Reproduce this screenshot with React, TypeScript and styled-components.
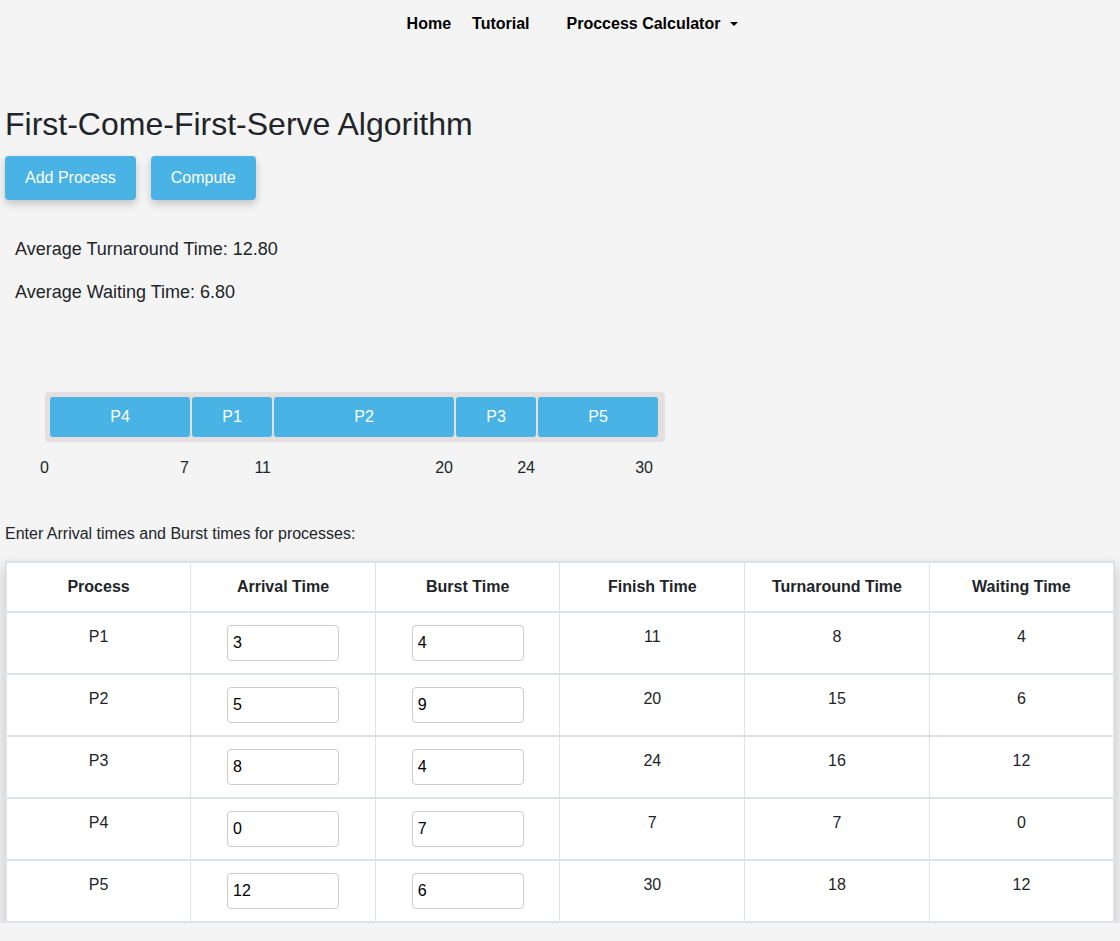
import React from "react";
import styled, { createGlobalStyle } from "styled-components";

const GlobalStyle = createGlobalStyle`
  html, body { margin: 0; padding: 0; background: #f4f4f4; }
  body { font-family: "Liberation Sans", Arial, sans-serif; color: #212529; font-size: 16px; }
  * { box-sizing: border-box; }
`;

const Nav = styled.nav`
  height: 46px;
  display: flex;
  justify-content: center;
  align-items: center;
  padding: 2px 0 0 25px;
`;

const NavLink = styled.a<{ $gap?: number }>`
  font-weight: 700;
  font-size: 16px;
  color: #000;
  text-decoration: none;
  margin-right: ${(p) => p.$gap ?? 0}px;
  display: inline-flex;
  align-items: center;
`;

const Caret = styled.span`
  display: inline-block;
  margin-left: 10px;
  width: 0;
  height: 0;
  border-left: 4px solid transparent;
  border-right: 4px solid transparent;
  border-top: 4px solid #000;
`;

const Page = styled.main`
  padding: 0 5px;
`;

const Title = styled.h2`
  font-size: 32px;
  font-weight: 400;
  line-height: 1.2;
  margin: 59px 0 13px;
  color: #212529;
`;

const ButtonRow = styled.div`
  display: flex;
  gap: 15px;
`;

const Button = styled.button`
  background: #48b3e4;
  color: #fff;
  border: none;
  border-radius: 4px;
  font-family: inherit;
  font-size: 16px;
  line-height: 24px;
  padding: 10px 20px;
  box-shadow: 0 4px 8px rgba(0, 0, 0, 0.2);
  cursor: pointer;
`;

const Stats = styled.div`
  padding-left: 10px;
  margin-top: 37px;
`;

const Stat = styled.p`
  margin: 0 0 19px;
  font-size: 18px;
  line-height: 24px;
  color: #212529;
`;

const Gantt = styled.div`
  margin: 88px 0 0 40px;
`;

const Bar = styled.div`
  display: inline-flex;
  gap: 2px;
  background: #e5dfdf;
  border-radius: 4px;
  padding: 5px 7px 5px 5px;
`;

const Block = styled.div`
  height: 40px;
  background: #48b3e4;
  color: #fff;
  border-radius: 3px;
  display: flex;
  align-items: center;
  justify-content: center;
  font-size: 16px;
`;

const Axis = styled.div`
  display: flex;
  margin-top: 17px;
  margin-left: -16px;
  font-size: 16px;
  color: #212529;
`;

const Tick = styled.div<{ $pad?: number }>`
  text-align: right;
  padding-right: ${(p) => p.$pad ?? 2}px;
`;

const Prompt = styled.p`
  margin: 48px 0 18px;
  font-size: 16px;
  color: #212529;
`;

const Table = styled.table`
  width: 100%;
  table-layout: fixed;
  border-collapse: collapse;
  background: #fff;
  border: 2px solid #dee2e6;
  box-shadow: 0 6px 14px rgba(0, 0, 0, 0.2);
`;

const Th = styled.th`
  font-weight: 700;
  padding: 12px;
  line-height: 24px;
  text-align: center;
  border-left: 1px solid #dee2e6;
  border-bottom: 2px solid #dee2e6;
  color: #212529;
`;

const Td = styled.td`
  padding: 12px;
  line-height: 24px;
  text-align: center;
  vertical-align: top;
  border-left: 1px solid #dee2e6;
  border-top: 2px solid #dee2e6;
  color: #212529;
`;

const Input = styled.input`
  width: 112px;
  height: 36px;
  border: 1px solid #ccc;
  border-radius: 4px;
  padding: 0 5px;
  font-family: inherit;
  font-size: 16px;
  color: #000;
  background: #fff;
`;

const rows = [
  { p: "P1", a: 3, b: 4, f: 11, t: 8, w: 4 },
  { p: "P2", a: 5, b: 9, f: 20, t: 15, w: 6 },
  { p: "P3", a: 8, b: 4, f: 24, t: 16, w: 12 },
  { p: "P4", a: 0, b: 7, f: 7, t: 7, w: 0 },
  { p: "P5", a: 12, b: 6, f: 30, t: 18, w: 12 },
];

const gantt = [
  { p: "P4", s: 0, e: 7 },
  { p: "P1", s: 7, e: 11 },
  { p: "P2", s: 11, e: 20 },
  { p: "P3", s: 20, e: 24 },
  { p: "P5", s: 24, e: 30 },
];

const UNIT = 20;

export default function App() {
  return (
    <>
      <GlobalStyle />
      <Nav>
        <NavLink $gap={21}>Home</NavLink>
        <NavLink $gap={37}>Tutorial</NavLink>
        <NavLink>
          Proccess Calculator <Caret />
        </NavLink>
      </Nav>
      <Page>
        <Title>First-Come-First-Serve Algorithm</Title>
        <ButtonRow>
          <Button>Add Process</Button>
          <Button>Compute</Button>
        </ButtonRow>
        <Stats>
          <Stat>Average Turnaround Time: 12.80</Stat>
          <Stat>Average Waiting Time: 6.80</Stat>
        </Stats>
        <Gantt>
          <Bar>
            {gantt.map((g) => (
              <Block key={g.p} style={{ width: (g.e - g.s) * UNIT }}>
                {g.p}
              </Block>
            ))}
          </Bar>
          <Axis>
            <Tick $pad={0} style={{ width: 20 }}>
              0
            </Tick>
            {gantt.map((g, i) => (
              <Tick
                key={g.p}
                style={{ width: (g.e - g.s) * UNIT + (i === gantt.length - 1 ? -2 : 2) }}
              >
                {g.e}
              </Tick>
            ))}
          </Axis>
        </Gantt>
        <Prompt>Enter Arrival times and Burst times for processes:</Prompt>
        <Table>
          <thead>
            <tr>
              <Th>Process</Th>
              <Th>Arrival Time</Th>
              <Th>Burst Time</Th>
              <Th>Finish Time</Th>
              <Th>Turnaround Time</Th>
              <Th>Waiting Time</Th>
            </tr>
          </thead>
          <tbody>
            {rows.map((r) => (
              <tr key={r.p}>
                <Td>{r.p}</Td>
                <Td>
                  <Input defaultValue={r.a} />
                </Td>
                <Td>
                  <Input defaultValue={r.b} />
                </Td>
                <Td>{r.f}</Td>
                <Td>{r.t}</Td>
                <Td>{r.w}</Td>
              </tr>
            ))}
          </tbody>
        </Table>
      </Page>
    </>
  );
}
